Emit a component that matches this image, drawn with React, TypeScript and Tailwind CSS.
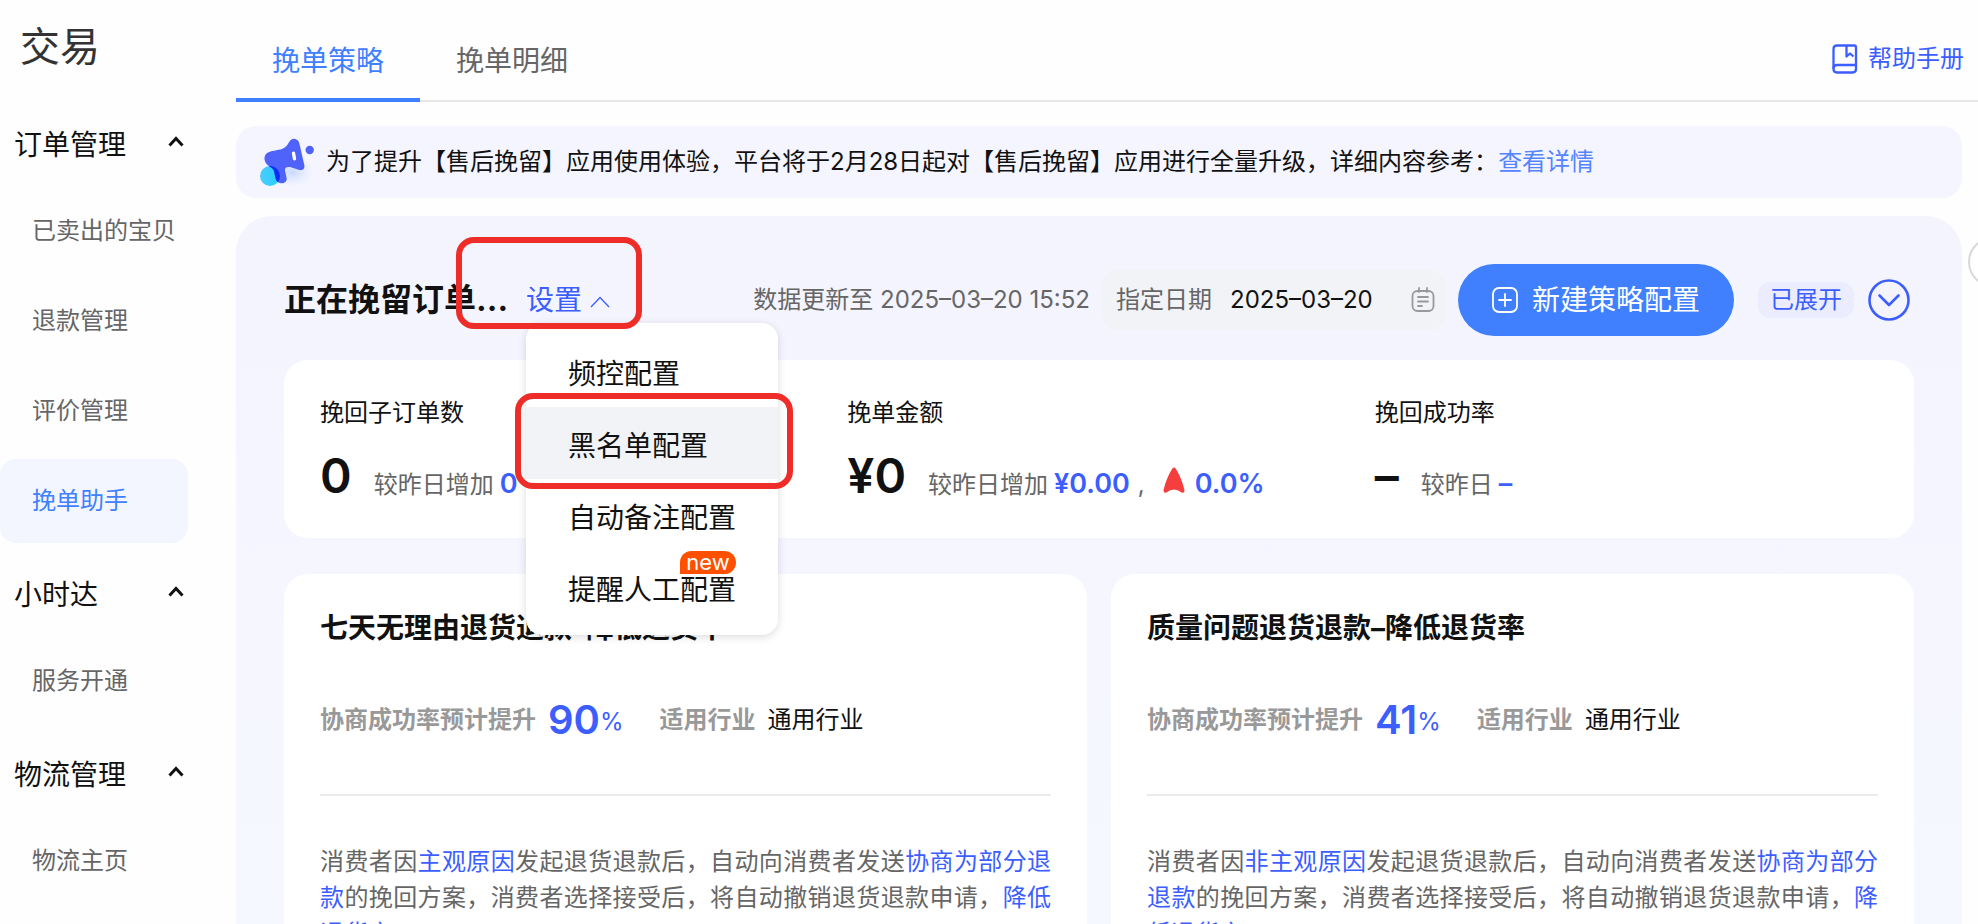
import { useState } from "react";
import clsx from "clsx";

interface NavGroup {
  title: string;
  items: string[];
}

interface StrategyCardProps {
  title: string;
  rate: number;
  reason: string;
}

const navGroups: NavGroup[] = [
  {
    title: "订单管理",
    items: ["已卖出的宝贝", "退款管理", "评价管理", "挽单助手"],
  },
  { title: "小时达", items: ["服务开通"] },
  { title: "物流管理", items: ["物流主页"] },
];

const tabs = ["挽单策略", "挽单明细"];

const settingItems = [
  { label: "频控配置" },
  { label: "黑名单配置", marked: true },
  { label: "自动备注配置" },
  { label: "提醒人工配置", isNew: true },
];

const strategies: StrategyCardProps[] = [
  { title: "七天无理由退货退款–降低退货率", rate: 90, reason: "主观原因" },
  { title: "质量问题退货退款–降低退货率", rate: 41, reason: "非主观原因" },
];

const MegaphoneIcon = () => (
  <svg width="60" height="52" viewBox="0 0 60 52" aria-hidden="true">
    <defs>
      <radialGradient id="glow">
        <stop offset="0" stopColor="#bcd0ff" stopOpacity="0.8" />
        <stop offset="1" stopColor="#dbe5ff" stopOpacity="0" />
      </radialGradient>
      <linearGradient id="cyan" x1="0" y1="0" x2="1" y2="0">
        <stop offset="0" stopColor="#4fc9fd" />
        <stop offset="1" stopColor="#22d3fb" />
      </linearGradient>
      <clipPath id="ball">
        <circle cx="10" cy="40" r="10" />
      </clipPath>
      <path
        id="horn"
        d="M29.5 5.5C31 3 34 2 36.500 3.500C38.500 4.500 39 6 39.500 8L44.300 29C45 32.500 43 34.800 39.500 34L30 31C27 30.500 24.500 31.500 25 34.500L26.700 42.500C27 46 24 47.500 21 47.200C18 47 16 45 15.500 42L14 35C13 31.500 9 31 7 28.500C3.500 24.500 3.500 19 8 16.500C13 14 20 14.500 24 12C26.500 10.500 28 8 29.500 5.500Z"
      />
    </defs>
    <ellipse cx="32" cy="36" rx="22" ry="15" fill="url(#glow)" />
    <circle cx="10" cy="40" r="10" fill="url(#cyan)" />
    <use href="#horn" fill="#4f63fb" />
    <use href="#horn" fill="#0b2cf5" clipPath="url(#ball)" />
    <rect
      x="32.300"
      y="15.500"
      width="3.400"
      height="9"
      rx="1.700"
      fill="#fff"
      transform="rotate(-10 34 20)"
    />
    <circle cx="49.700" cy="14" r="4.200" fill="#4f63fb" />
  </svg>
);

const HelpIcon = () => (
  <svg
    width="26"
    height="30"
    viewBox="0 0 26 30"
    fill="none"
    stroke="currentColor"
    strokeWidth="2.300"
    strokeLinejoin="round"
    aria-hidden="true"
  >
    <path d="M5 1.500H22Q24 1.500 24 3.500V25Q24 28.500 20.500 28.500H5Q1.500 28.500 1.500 25V5Q1.500 1.500 5 1.500Z" />
    <path d="M1.500 24.500Q1.500 21 5 21H24" />
    <path d="M14.500 1.500V12.500L18 9.500L21.500 12.500" />
  </svg>
);

const CalendarIcon = () => (
  <svg
    width="24"
    height="26"
    viewBox="0 0 24 26"
    fill="none"
    stroke="#999"
    strokeWidth="1.800"
    strokeLinecap="round"
    aria-hidden="true"
  >
    <rect x="1.500" y="4" width="21" height="20" rx="5" />
    <path d="M8 1V5M16 1V5M7 10H17M7 14.500H17M7 19H11" />
  </svg>
);

const PlusBoxIcon = () => (
  <svg
    width="26"
    height="26"
    viewBox="0 0 26 26"
    fill="none"
    stroke="currentColor"
    strokeWidth="1.800"
    strokeLinecap="round"
    aria-hidden="true"
  >
    <rect x="1" y="1" width="24" height="24" rx="6" />
    <path d="M13 7V19M7 13H19" />
  </svg>
);

const Sidebar = () => {
  const [active, setActive] = useState("挽单助手");

  return (
    <aside className="w-[188px] shrink-0">
      <h1 className="h-[99px] pl-5 pt-5 text-[40px] leading-[54px] text-[#333]">
        交易
      </h1>
      <nav className="flex flex-col gap-[6px]">
        {navGroups.map((group) => (
          <div key={group.title} className="flex flex-col gap-[6px]">
            <button className="flex h-[84px] w-full items-center justify-between pl-[14px] pr-1 pt-2 text-[28px] text-[#111]">
              {group.title}
              <svg
                width="16"
                height="12"
                viewBox="0 0 16 12"
                className="mb-2"
                fill="none"
                stroke="currentColor"
                strokeWidth="3"
                aria-hidden="true"
              >
                <path d="M1.500 10.500L8 3.500L14.500 10.500" />
              </svg>
            </button>
            {group.items.map((item) => (
              <button
                key={item}
                onClick={() => setActive(item)}
                className={clsx(
                  "h-[84px] w-full rounded-2xl pl-8 text-left text-2xl",
                  active === item
                    ? "bg-[#f3f6ff] text-[#4080ff]"
                    : "text-[#666]"
                )}
              >
                {item}
              </button>
            ))}
          </div>
        ))}
      </nav>
    </aside>
  );
};

const SettingsMenu = () => {
  const [open, setOpen] = useState(true);

  return (
    <div className="relative ml-[18px] shrink-0">
      <button
        onClick={() => setOpen(!open)}
        aria-expanded={open}
        className="flex items-center gap-2 text-[28px] leading-[42px] text-[#3d5eff]"
      >
        设置
        <svg
          width="20"
          height="12"
          viewBox="0 0 20 12"
          className={clsx("mt-1", !open && "rotate-180")}
          fill="none"
          stroke="currentColor"
          strokeWidth="1.300"
          aria-hidden="true"
        >
          <path d="M1 11L10 1.500L19 11" />
        </svg>
      </button>
      <span className="pointer-events-none absolute -left-[70px] -top-[42px] z-20 h-[92px] w-[186px] rounded-[18px] border-6 border-[#ee2d28]" />

      {open && (
        <ul className="absolute left-0 top-11 z-10 w-[252px] rounded-2xl bg-white py-3 shadow-[0_2px_8px_rgba(0,0,0,0.14)]">
          {settingItems.map((item) => (
            <li key={item.label} className="relative">
              <button
                className={clsx(
                  "h-[72px] w-full pl-[42px] pt-[6px] text-left text-[28px] text-[#111]",
                  item.marked && "bg-[#f2f3f7]"
                )}
              >
                {item.label}
              </button>
              {item.isNew && (
                <span className="absolute left-[154px] top-0 flex h-[23px] w-14 items-center justify-center rounded-xl rounded-bl-none bg-[#ff5000] pb-[2px] text-[22px] leading-none text-white">
                  new
                </span>
              )}
              {item.marked && (
                <span className="pointer-events-none absolute -bottom-[10px] -left-[11px] -right-[15px] -top-[14px] rounded-[18px] border-6 border-[#ee2d28]" />
              )}
            </li>
          ))}
        </ul>
      )}
    </div>
  );
};

const PanelHeader = () => {
  const [date, setDate] = useState("2025–03–20");

  return (
    <div className="relative z-10 flex h-[72px] items-center">
      <h2 className="shrink-0 text-[32px] font-bold leading-[48px] text-[#111]">
        正在挽留订单...
      </h2>
      <SettingsMenu />
      <p className="ml-auto whitespace-nowrap text-2xl text-[#666]">
        数据更新至 2025–03–20 15:52
      </p>
      <div className="ml-3 flex h-[60px] w-[344px] shrink-0 items-center rounded-2xl bg-[#f2f3f7] pl-[14px] pr-[11px] text-2xl">
        <label htmlFor="date" className="shrink-0 text-[#666]">
          指定日期
        </label>
        <input
          id="date"
          value={date}
          onChange={(e) => setDate(e.target.value)}
          className="ml-[18px] min-w-0 flex-1 bg-transparent text-[#111] outline-none"
        />
        <CalendarIcon />
      </div>
      <button className="ml-3 flex h-[72px] w-[276px] shrink-0 items-center justify-center gap-[14px] rounded-full bg-[#4080ff] text-[28px] text-white">
        <PlusBoxIcon />
        新建策略配置
      </button>
      <span className="ml-6 shrink-0 rounded-xl bg-[#ebedff] px-3 text-2xl leading-9 text-[#3d5eff]">
        已展开
      </span>
      <button
        aria-label="收起"
        className="ml-[14px] mr-1 shrink-0 text-[#3d5eff]"
      >
        <svg
          width="42"
          height="42"
          viewBox="0 0 42 42"
          fill="none"
          stroke="currentColor"
          strokeWidth="2.600"
          strokeLinecap="round"
          strokeLinejoin="round"
          aria-hidden="true"
        >
          <circle cx="21" cy="21" r="19.500" />
          <path d="M11.500 16.500L21 26L30.500 16.500" />
        </svg>
      </button>
    </div>
  );
};

const Stats = () => (
  <section className="mt-6 grid grid-cols-3 gap-6 rounded-3xl bg-white px-9 pb-[30px] pt-[35px] text-2xl leading-9">
    <div>
      <h3 className="text-[#111]">挽回子订单数</h3>
      <p className="mt-[13px] flex items-baseline whitespace-nowrap text-[#666]">
        <span className="text-5xl leading-[64px] font-semibold text-[#111]">
          0
        </span>
        <span className="ml-[22px]">较昨日增加</span>
        <span className="ml-[6px] text-[27px] font-semibold text-[#3d5eff]">
          0
        </span>
        <span className="ml-2">,</span>
      </p>
    </div>
    <div>
      <h3 className="text-[#111]">挽单金额</h3>
      <p className="mt-[13px] flex items-baseline whitespace-nowrap text-[#666]">
        <span className="text-5xl leading-[64px] font-semibold text-[#111]">
          ¥0
        </span>
        <span className="ml-[22px]">较昨日增加</span>
        <span className="ml-[6px] text-[27px] font-semibold text-[#3d5eff]">
          ¥0.00
        </span>
        <span className="ml-2">,</span>
        <svg
          width="22"
          height="26"
          viewBox="0 0 22 26"
          className="ml-[18px]"
          fill="#f53f3f"
          aria-hidden="true"
        >
          <path d="M9.200 1.800Q11 -1 12.800 1.800Q18.500 11 21.500 23Q21.700 26.500 18.500 25.500Q11 19.500 3.500 25.500Q0.300 26.500 0.500 23Q3.500 11 9.200 1.800Z" />
        </svg>
        <span className="ml-[10px] text-[27px] font-semibold text-[#3d5eff]">
          0.0%
        </span>
      </p>
    </div>
    <div>
      <h3 className="text-[#111]">挽回成功率</h3>
      <p className="mt-[13px] flex items-baseline whitespace-nowrap text-[#666]">
        <span className="text-5xl leading-[64px] font-semibold text-[#111]">
          –
        </span>
        <span className="ml-[22px]">较昨日</span>
        <span className="ml-[6px] text-[27px] font-semibold text-[#3d5eff]">
          –
        </span>
      </p>
    </div>
  </section>
);

const StrategyCard = ({ title, rate, reason }: StrategyCardProps) => (
  <article className="rounded-3xl bg-white px-9 pb-12 pt-[34px]">
    <h3 className="text-[28px] font-bold leading-10 text-[#111]">{title}</h3>
    <div className="mt-12 flex h-12 items-center whitespace-nowrap text-2xl">
      <span className="font-semibold text-[#999]">协商成功率预计提升</span>
      <span className="ml-3 text-[40px] font-semibold text-[#3d5eff]">
        {rate}
      </span>
      <span className="pt-1 text-[#3d5eff]">%</span>
      <span className="ml-9 font-semibold text-[#999]">适用行业</span>
      <span className="ml-3 text-[#111]">通用行业</span>
    </div>
    <hr className="mt-[50px] border-t-2 border-[#ebebeb]" />
    <p className="mt-12 text-justify text-2xl leading-9 text-[#666]">
      消费者因<span className="text-[#3d5eff]">{reason}</span>
      发起退货退款后，自动向消费者发送
      <span className="text-[#3d5eff]">协商为部分退款</span>
      的挽回方案，消费者选择接受后，将自动撤销退货退款申请，
      <span className="text-[#3d5eff]">降低退货率</span>
    </p>
  </article>
);

const App = () => {
  const [activeTab, setActiveTab] = useState(tabs[0]);

  return (
    <div className="relative flex h-screen gap-12 overflow-hidden bg-[#fefefe] font-['Inter','Noto_Sans_CJK_SC',sans-serif]">
      <Sidebar />

      <main className="min-w-0 flex-1">
        <header className="flex h-[102px] items-stretch justify-between border-b-2 border-[#e6e6e6]">
          <div className="-mb-[2px] flex">
            {tabs.map((tab) => (
              <button
                key={tab}
                onClick={() => setActiveTab(tab)}
                className={clsx(
                  "border-b-4 px-9 pt-6 text-[28px]",
                  activeTab === tab
                    ? "border-[#4080ff] text-[#4080ff]"
                    : "border-transparent text-[#666]"
                )}
              >
                {tab}
              </button>
            ))}
          </div>
          <a
            href="#help"
            className="flex items-center gap-[10px] pr-[14px] pt-[18px] text-2xl text-[#3d5eff]"
          >
            <HelpIcon />
            帮助手册
          </a>
        </header>

        <div className="mr-4 mt-6 flex h-[72px] items-center whitespace-nowrap rounded-[20px] bg-[#f4f5ff] pl-6 text-2xl text-[#111]">
          <MegaphoneIcon />
          <p className="ml-[6px]">
            为了提升【售后挽留】应用使用体验，平台将于2月28日起对【售后挽留】应用进行全量升级，详细内容参考：
            <a href="#detail" className="text-[#5584ff]">
              查看详情
            </a>
          </p>
        </div>

        <section className="mr-4 mt-[18px] rounded-[36px] bg-linear-to-b from-[#f4f4ff] to-[#f6f8ff] p-12">
          <PanelHeader />
          <Stats />
          <div className="mt-9 grid grid-cols-2 gap-6">
            {strategies.map((strategy) => (
              <StrategyCard key={strategy.title} {...strategy} />
            ))}
          </div>
        </section>
      </main>

      {/* Floating side handle, mostly off the right edge */}
      <span className="absolute -right-10 top-[237px] size-[50px] rounded-full border-2 border-[#d9d9d9] bg-white" />
    </div>
  );
};

export default App;
